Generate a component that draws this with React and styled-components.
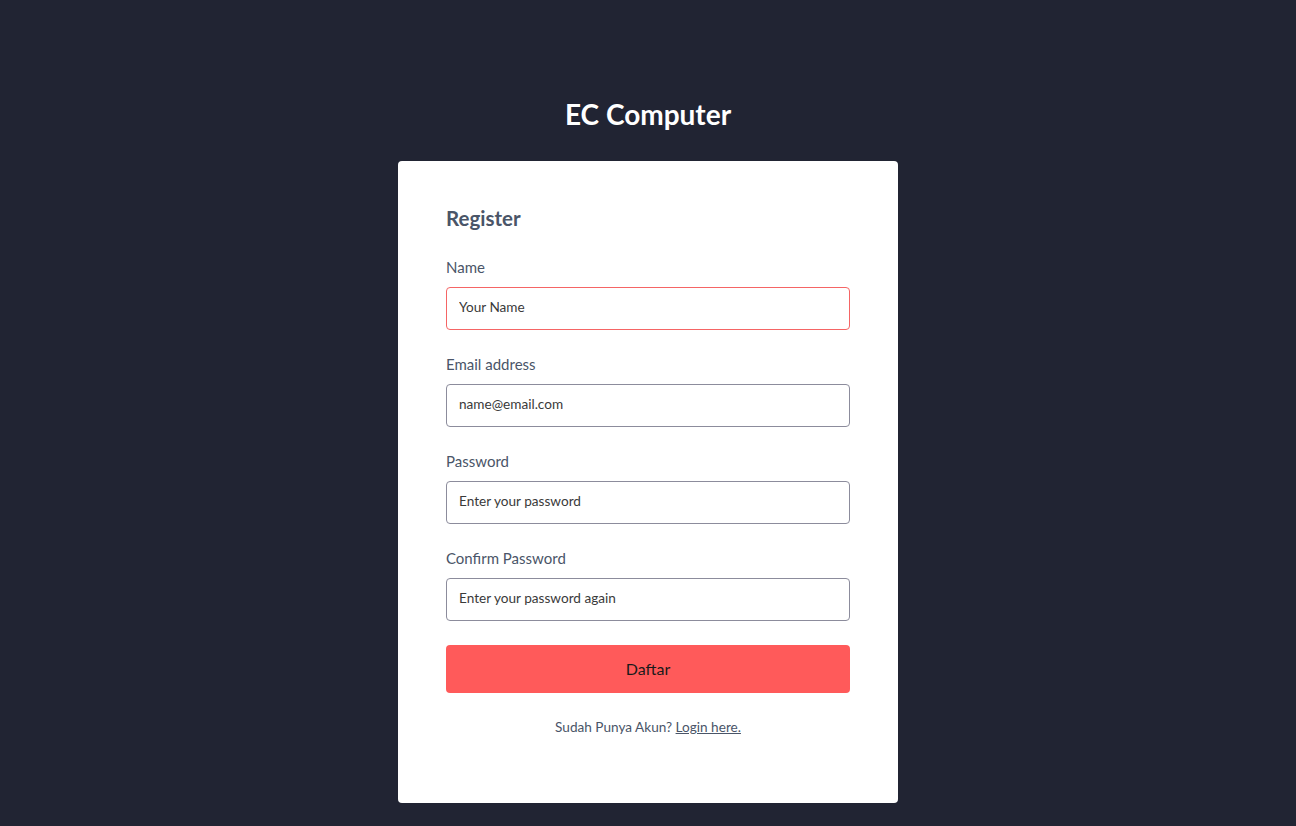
import React from "react";
import styled, { createGlobalStyle } from "styled-components";

const GlobalStyle = createGlobalStyle`
  html, body { margin: 0; padding: 0; background: #212433; }
  body { font-family: Lato, "Noto Sans", sans-serif; }
  * { box-sizing: border-box; }
`;

const Page = styled.main`
  min-height: 826px;
  display: flex;
  flex-direction: column;
  align-items: center;
  padding-top: 98px;
`;

const Title = styled.h1`
  margin: 0 0 31px;
  font-size: 28px;
  line-height: 32px;
  font-weight: 700;
  color: #ffffff;
`;

const Card = styled.section`
  width: 500px;
  background: #ffffff;
  border-radius: 4px;
  padding: 47px 48px 66px;
`;

const Heading = styled.h2`
  margin: 0 0 29px;
  font-size: 20.5px;
  line-height: 20px;
  font-weight: 700;
  color: #4a5568;
`;

const Form = styled.form`
  display: flex;
  flex-direction: column;
  gap: 24px;
`;

const Field = styled.div`
  display: flex;
  flex-direction: column;
`;

const Label = styled.label`
  font-size: 15px;
  line-height: 20px;
  color: #4a5568;
  margin-bottom: 10px;
`;

const Input = styled.input`
  height: 43px;
  width: 100%;
  border: 1px solid ${(p) => (p.$error ? "#f56565" : "#8c8c9c")};
  border-radius: 4px;
  padding: 0 12px 4px;
  font-family: inherit;
  font-size: 13.6px;
  color: #2d2d2d;
  outline: none;
  &::placeholder { color: #3a3a3a; opacity: 1; }
`;

const Button = styled.button`
  height: 48px;
  width: 100%;
  border: none;
  border-radius: 4px;
  background: #ff5a5a;
  color: #1a1a1a;
  font-family: inherit;
  font-size: 16px;
  padding: 0 0 2px;
  cursor: pointer;
`;

const Footer = styled.p`
  margin: 0;
  text-align: center;
  font-size: 13.6px;
  line-height: 20px;
  color: #4a5568;
`;

const Link = styled.a`
  color: #4a5568;
  text-decoration: underline;
`;

export default function App() {
  return (
    <>
      <GlobalStyle />
      <Page>
        <Title>EC Computer</Title>
        <Card>
          <Heading>Register</Heading>
          <Form onSubmit={(e) => e.preventDefault()}>
            <Field>
              <Label>Name</Label>
              <Input $error placeholder="Your Name" />
            </Field>
            <Field>
              <Label>Email address</Label>
              <Input placeholder="name@email.com" />
            </Field>
            <Field>
              <Label>Password</Label>
              <Input type="password" placeholder="Enter your password" />
            </Field>
            <Field>
              <Label>Confirm Password</Label>
              <Input type="password" placeholder="Enter your password again" />
            </Field>
            <Button type="submit">Daftar</Button>
            <Footer>
              Sudah Punya Akun? <Link href="#">Login here.</Link>
            </Footer>
          </Form>
        </Card>
      </Page>
    </>
  );
}
